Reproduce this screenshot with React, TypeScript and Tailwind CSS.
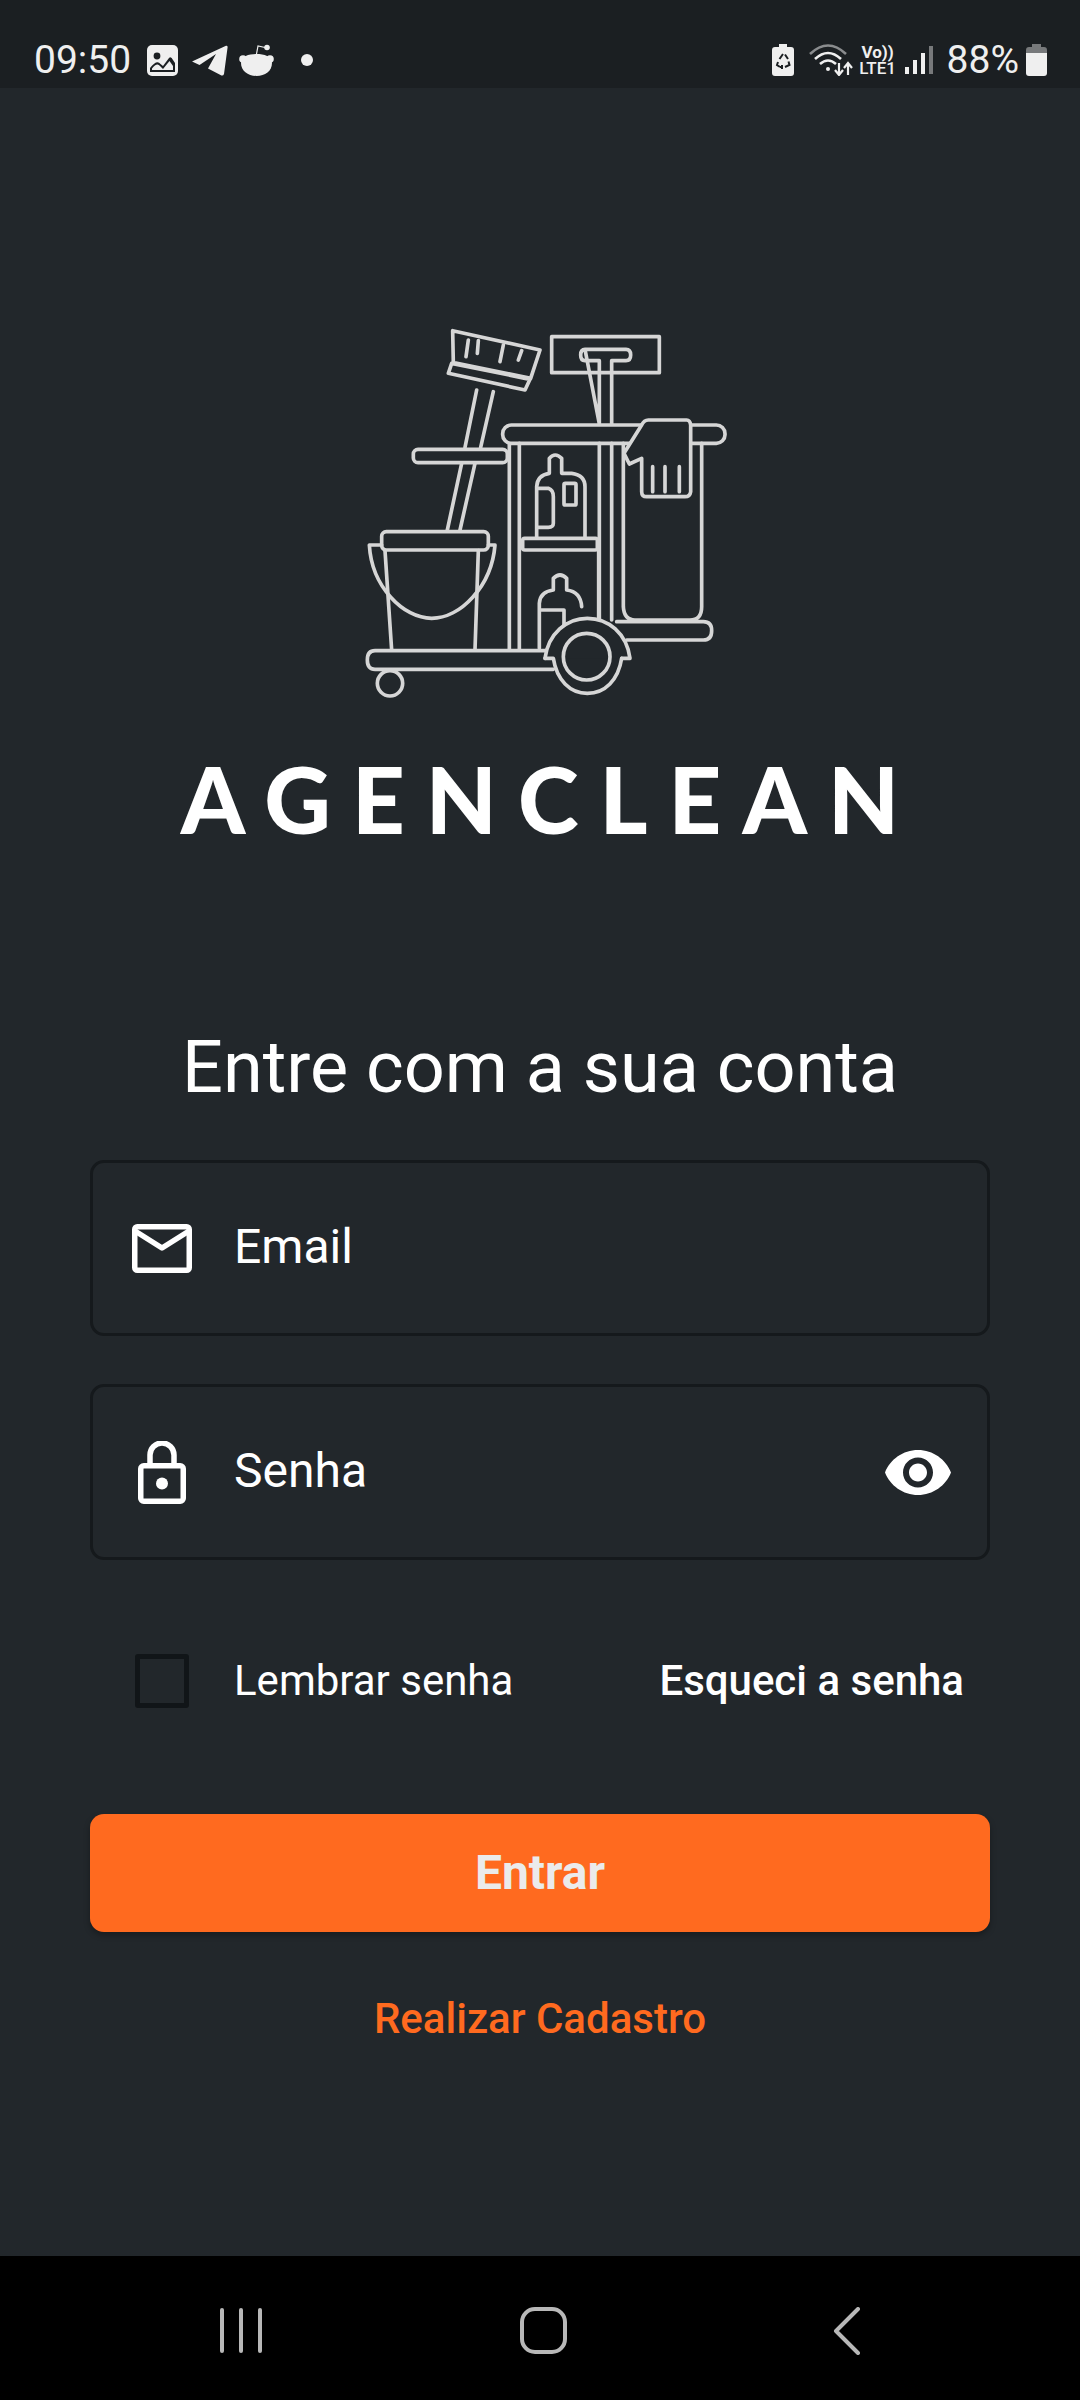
import React from 'react';

const CartLogo: React.FC = () => (
  <svg viewBox="0 0 1200 1200" className="block w-[400px] h-[400px] mx-auto" fill="none" stroke="#d6d6d6" strokeWidth={11} strokeLinejoin="round" strokeLinecap="round">
    {/* broom */}
    <path d="M338 62 600 120 572 205 340 158Z" />
    <path d="M335 160 570 208 555 240 325 190Z" />
    <path d="M385 90 378 140M415 92 412 130M490 105 480 155M545 122 535 150" />
    <path d="M410 240 375 412M460 245 422 412M365 460 322 660M405 460 360 660" />
    {/* mop */}
    <path d="M635 80H958V188H635Z" />
    <path d="M735 118H858Q872 118 872 135 872 152 858 152H815V342M778 342V152H735Q722 152 722 135 722 118 735 118Z" />
    {/* left shelf */}
    <rect x="220" y="418" width="282" height="40" rx="14" />
    {/* uprights */}
    <path d="M508 400V1020M538 400V1020M778 400V930M815 400V930M776 725V925" />
    {/* bag */}
    <path d="M850 400V890Q852 930 885 930H1050Q1085 930 1085 890V400" />
    {/* top bar */}
    <rect x="488" y="345" width="667" height="55" rx="26" />
    {/* middle shelf */}
    <rect x="548" y="685" width="224" height="35" rx="6" />
    {/* bottle 1 */}
    <path d="M590 680V530Q592 495 628 490V445Q645 425 665 445V490H695Q735 495 735 530V680" />
    <path d="M595 535H625Q640 540 640 560V640Q640 652 625 652H595" />
    <rect x="672" y="520" width="36" height="65" rx="4" />
    {/* bottle 2 */}
    <path d="M598 1015V880Q600 845 640 840V805Q660 785 680 805V840Q722 845 725 890" />
    <path d="M600 900H672V945" />
    {/* bucket */}
    <path d="M135 722 155 1020M415 722 405 1020" />
    <rect x="125" y="665" width="320" height="55" rx="14" />
    <path d="M125 705H88C95 830 190 925 275 925 360 925 455 830 465 705H445" />
    {/* lower plates */}
    <path d="M620 1022H105Q82 1022 82 1050 82 1078 105 1078H640" />
    <path d="M830 935H1090Q1115 935 1115 962 1115 990 1090 990H860" />
    <circle cx="150" cy="1120" r="38" />
    {/* big wheel */}
    <path d="M615 1045C625 970 680 925 742 925 805 925 860 970 870 1045H845" fill="#22272b" />
    <path d="M615 1045H640C650 1110 690 1150 742 1150 795 1150 835 1110 845 1045" fill="#22272b" />
    <circle cx="740" cy="1040" r="70" />
    {/* glove */}
    <path d="M925 330H1040Q1050 330 1052 345L1052 545Q1050 560 1035 560H920Q905 560 905 545V445L868 462 852 430 905 345Q912 330 925 330Z" fill="#22272b" />
    <path d="M938 470V545M975 470V545M1018 470V545" />
  </svg>
);

const StatusBar: React.FC = () => (
  <div className="h-[88px] bg-[#1b1f22] flex items-end pb-[10px] pl-[34px] pr-[33px] justify-between text-[#efefef]">
    <div className="flex items-center h-[36px]">
      <span className="text-[39px] leading-none w-[113px]">09:50</span>
      {/* gallery */}
      <svg viewBox="0 0 31 31" className="w-[31px] h-[31px]">
        <rect width="31" height="31" rx="5" fill="#efefef" />
        <circle cx="10" cy="11" r="3.4" fill="#1b1f22" />
        <path d="M3 27V23Q10 14 13.5 19L16 21 22 13Q24 11 26 15L28 18V27Z" fill="#1b1f22" />
        <path d="M5 25V23.5Q10 17 13 21L16 24 22.5 16 26 21V25Z" fill="#efefef" />
      </svg>
      {/* telegram */}
      <svg viewBox="0 0 37 31" className="w-[37px] h-[31px] ml-[13px]">
        <path d="M1 16.5 35 0.8Q37 0.5 36.5 3L33 29Q32 31.5 29.5 30L17 23.5 25 9 8.5 20Z" fill="#efefef" />
      </svg>
      {/* reddit */}
      <svg viewBox="0 0 35 32" className="w-[35px] h-[32px] ml-[11px]">
        <path d="M17.5 10 19 2 26 3.5" fill="none" stroke="#efefef" strokeWidth="1.2" />
        <circle cx="28" cy="3.5" r="2.8" fill="#efefef" />
        <circle cx="4" cy="15" r="3.8" fill="#efefef" />
        <circle cx="31" cy="15" r="3.8" fill="#efefef" />
        <path d="M2 19C2 12 10 10 17.5 10 25 10 33 12 33 19 33 27 26 32 17.5 32 9 32 2 27 2 19Z" fill="#efefef" />
      </svg>
      <span className="w-[12px] h-[12px] rounded-full bg-[#efefef] ml-[27px]" />
    </div>
    <div className="flex items-center h-[36px]">
      {/* battery saver */}
      <svg viewBox="0 0 22 32" className="w-[22px] h-[32px]">
        <path d="M7 0H15V3H19Q22 3 22 6V29Q22 32 19 32H3Q0 32 0 29V6Q0 3 3 3H7Z" fill="#efefef" />
        <path d="M11 10 7.5 15M13 10.5 16 15M6 18 5 21 8 23M16.5 17.5 17.5 21 13 23M8 23H10M10 21V25" fill="none" stroke="#1b1f22" strokeWidth="2" />
      </svg>
      {/* wifi */}
      <svg viewBox="0 0 46 32" className="w-[46px] h-[32px] ml-[15px]">
        <path d="M1 10Q19 -7 37 10" fill="none" stroke="#8a8c8e" strokeWidth="2.6" />
        <path d="M6 15Q19 3 32 15M11 20Q19 13 27 20" fill="none" stroke="#efefef" strokeWidth="2.6" />
        <circle cx="19" cy="25" r="2" fill="#efefef" />
        <path d="M30 19V30M26 26 30 31 34 26M39 31V20M35 24 39 19 43 24" fill="none" stroke="#efefef" strokeWidth="2.2" />
      </svg>
      {/* volte */}
      <div className="flex flex-col items-center ml-[3px] w-[40px] font-bold">
        <span className="text-[17px] leading-[17px] whitespace-nowrap">Vo))</span>
        <span className="text-[17px] leading-[15px] font-medium whitespace-nowrap">LTE1</span>
      </div>
      {/* signal */}
      <div className="flex items-end gap-[4px] h-[28px] ml-[7px]">
        <span className="w-[4px] h-[7px] bg-[#efefef]" />
        <span className="w-[4px] h-[14px] bg-[#efefef]" />
        <span className="w-[4px] h-[21px] bg-[#efefef]" />
        <span className="w-[4px] h-[28px] bg-[#77797b]" />
      </div>
      <span className="text-[39px] leading-none ml-[14px]">88%</span>
      <svg viewBox="0 0 21 32" className="w-[21px] h-[32px] ml-[7px]">
        <path d="M6 0H15V3H18Q21 3 21 6V10H0V6Q0 3 3 3H6Z" fill="#77797b" />
        <path d="M0 9H21V29Q21 32 18 32H3Q0 32 0 29Z" fill="#efefef" />
      </svg>
    </div>
  </div>
);

const NavBar: React.FC = () => (
  <div className="h-[144px] bg-black flex items-start pt-[51px] pl-[220px]">
    <div className="flex gap-[15px] pt-[1px]">
      <span className="w-[4px] h-[45px] rounded-full bg-[#b8b8b8]" />
      <span className="w-[4px] h-[45px] rounded-full bg-[#b8b8b8]" />
      <span className="w-[4px] h-[45px] rounded-full bg-[#b8b8b8]" />
    </div>
    <div className="ml-[258px] w-[47px] h-[47px] border-[4px] border-[#b8b8b8] rounded-[15px]" />
    <svg viewBox="0 0 28 48" className="ml-[266px] w-[28px] h-[48px]" fill="none" stroke="#b8b8b8" strokeWidth="4" strokeLinecap="round" strokeLinejoin="round">
      <path d="M25 2 3 24 25 46" />
    </svg>
  </div>
);

export default function App() {
  return (
    <div className="w-[1080px] h-[2400px] flex flex-col bg-[#22272b] text-white font-[Roboto,sans-serif] overflow-hidden">
      <StatusBar />

      <main className="flex-1 px-[90px]">
        <div className="pt-[222px]">
          <CartLogo />
        </div>

        {/* wordmark */}
        <div className="mt-[49px] h-[80px] flex items-center justify-center font-[Lato,sans-serif] font-black text-[92px] leading-[80px] tracking-[21px] whitespace-nowrap pl-[21px]">
          AGENCLEAN
        </div>

        <h1 className="mt-[187px] h-[84px] text-center text-[72px] leading-[84px] font-normal">Entre com a sua conta</h1>

        <div className="mt-[50px] h-[176px] border-[3px] border-[#15191c] rounded-[14px] flex items-center pl-[39px] pr-[36px]">
          <svg viewBox="0 0 60 49" className="w-[60px] h-[49px] shrink-0" fill="none" stroke="#fff" strokeWidth="5.5" strokeLinejoin="round">
            <rect x="2.75" y="2.75" width="54.5" height="43.5" rx="2.5" />
            <path d="M3 7 30 24 57 7" />
          </svg>
          <span className="ml-[42px] text-[48px] leading-none pb-[2px]">Email</span>
        </div>

        <div className="mt-[48px] h-[176px] border-[3px] border-[#15191c] rounded-[14px] flex items-center pl-[45px] pr-[36px]">
          <svg viewBox="0 0 48 63" className="w-[48px] h-[63px] shrink-0">
            <path d="M12 24V14A12 12 0 0 1 36 14V24" fill="none" stroke="#fff" strokeWidth="5.5" />
            <rect x="2.75" y="24.75" width="42.5" height="35.5" rx="3" fill="none" stroke="#fff" strokeWidth="5.5" />
            <circle cx="24" cy="42.5" r="6" fill="#fff" />
          </svg>
          <span className="ml-[48px] text-[48px] leading-none pb-[2px] flex-1">Senha</span>
          <svg viewBox="1 4.5 22 15" className="w-[66px] h-[45px] shrink-0" fill="#fff">
            <path d="M12 4.5C7 4.5 2.73 7.61 1 12c1.73 4.39 6 7.5 11 7.5s9.27-3.11 11-7.5c-1.73-4.39-6-7.5-11-7.5zM12 17c-2.76 0-5-2.24-5-5s2.24-5 5-5 5 2.24 5 5-2.24 5-5 5zm0-8c-1.66 0-3 1.34-3 3s1.34 3 3 3 3-1.34 3-3-1.34-3-3-3z" />
          </svg>
        </div>

        <div className="mt-[94px] h-[54px] flex items-center pl-[45px] pr-[26px]">
          <div className="w-[54px] h-[54px] border-[5px] border-[#111518] rounded-[3px] shrink-0" />
          <span className="ml-[45px] text-[42px] leading-none flex-1">Lembrar senha</span>
          <span className="text-[42px] leading-none font-medium">Esqueci a senha</span>
        </div>

        <button className="mt-[106px] w-full h-[118px] rounded-[14px] bg-[#ff6a1f] text-[#ebebeb] text-[48px] font-bold shadow-[0_3px_6px_rgba(0,0,0,0.3)]">
          Entrar
        </button>

        <div className="mt-[62px] text-center text-[42px] leading-[50px] font-medium text-[#ff6a1f]">Realizar Cadastro</div>
      </main>

      <NavBar />
    </div>
  );
}
